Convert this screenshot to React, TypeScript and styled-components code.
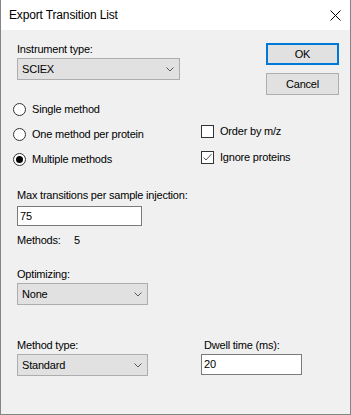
import React from "react";
import styled, { createGlobalStyle } from "styled-components";

const Global = createGlobalStyle`
  html, body { margin: 0; padding: 0; background: #ffffff; }
  body { font-family: "Liberation Sans", Arial, sans-serif; font-size: 11px; letter-spacing: -0.2px; color: #000; }
  * { box-sizing: border-box; }
`;

const Window = styled.div`
  width: 351px;
  height: 415px;
  border: 1px solid #858585;
  border-top: none;
  background: #f0f0f0;
  display: flex;
  flex-direction: column;
`;

const TitleBar = styled.div`
  height: 30px;
  background: #ffffff;
  display: flex;
  align-items: center;
  justify-content: space-between;
  padding: 0 9px 0 8px;
  flex-shrink: 0;
`;

const Title = styled.span`
  font-size: 12px;
  letter-spacing: -0.15px;
  line-height: 15px;
  color: #000;
  margin-top: 1px;
`;

const Body = styled.div`
  flex: 1;
  padding: 12px 11px 0 16px;
  display: flex;
  flex-direction: column;
`;

const TopSection = styled.div`
  display: flex;
  justify-content: space-between;
  align-items: flex-start;
`;

const Field = styled.div<{ $w?: number }>`
  display: flex;
  flex-direction: column;
  width: ${(p) => (p.$w ? `${p.$w}px` : "auto")};
`;

const Label = styled.div<{ $indent?: number; $gap?: number }>`
  line-height: 15px;
  padding-left: ${(p) => p.$indent ?? 0}px;
  margin-bottom: ${(p) => p.$gap ?? 1}px;
  white-space: nowrap;
`;

const Combo = styled.div<{ $w: number }>`
  width: ${(p) => p.$w}px;
  height: 22px;
  background: #e1e1e1;
  border: 1px solid #adadad;
  display: flex;
  align-items: center;
  justify-content: space-between;
  padding: 0 5px 0 4px;
  line-height: 15px;
`;

const TextBox = styled.div<{ $w: number; $h: number }>`
  width: ${(p) => p.$w}px;
  height: ${(p) => p.$h}px;
  background: #ffffff;
  border: 1px solid #7a7a7a;
  display: flex;
  align-items: center;
  padding-left: 2px;
  line-height: 15px;
`;

const ButtonColumn = styled.div`
  display: flex;
  flex-direction: column;
  gap: 8px;
  margin-top: 1px;
`;

const Button = styled.div<{ $default?: boolean }>`
  width: 73px;
  height: 22px;
  background: #e1e1e1;
  border: ${(p) => (p.$default ? "2px solid #0078d7" : "1px solid #adadad")};
  display: flex;
  align-items: center;
  justify-content: center;
  line-height: 15px;
`;

const OptionsSection = styled.div`
  display: flex;
  margin-top: 2px;
  margin-left: -4px;
`;

const RadioColumn = styled.div`
  width: 188px;
  display: flex;
  flex-direction: column;
`;

const CheckColumn = styled.div`
  display: flex;
  flex-direction: column;
  padding-top: 21px;
`;

const OptionRow = styled.div<{ $h: number }>`
  height: ${(p) => p.$h}px;
  display: flex;
  align-items: center;
  gap: 6px;
  line-height: 15px;
`;

const RadioCircle = styled.span<{ $on?: boolean }>`
  width: 13px;
  height: 13px;
  border-radius: 50%;
  border: 1px solid #333333;
  background: #ffffff;
  display: flex;
  align-items: center;
  justify-content: center;
  flex-shrink: 0;
  &::after {
    content: "";
    width: 7px;
    height: 7px;
    border-radius: 50%;
    background: ${(p) => (p.$on ? "#000" : "transparent")};
  }
`;

const CheckBox = styled.span`
  width: 13px;
  height: 13px;
  border: 1px solid #333333;
  background: #ffffff;
  display: flex;
  align-items: center;
  justify-content: center;
  flex-shrink: 0;
`;

const MaxSection = styled.div`
  margin-top: 16px;
  display: flex;
  flex-direction: column;
`;

const MethodsLine = styled.div`
  margin-top: 7px;
  line-height: 15px;
  display: flex;
`;

const MethodsKey = styled.span`
  width: 57px;
`;

const OptimizingSection = styled.div`
  margin-top: 19px;
`;

const BottomRow = styled.div`
  margin-top: 33px;
  display: flex;
  align-items: flex-start;
`;

const Chevron = () => (
  <svg width="8" height="5" viewBox="0 0 8 5">
    <polyline points="0.5,0.5 4,4 7.5,0.5" fill="none" stroke="#5a5a5a" strokeWidth="1" />
  </svg>
);

const CloseIcon = () => (
  <svg width="11" height="11" viewBox="0 0 11 11">
    <path d="M0.5 0.5 L10.5 10.5 M10.5 0.5 L0.5 10.5" stroke="#000" strokeWidth="1" />
  </svg>
);

const CheckMark = () => (
  <svg width="11" height="11" viewBox="0 0 11 11">
    <polyline points="1.5,5.5 4,8 9.5,2" fill="none" stroke="#555" strokeWidth="1" />
  </svg>
);

export default function App() {
  return (
    <>
      <Global />
      <Window>
        <TitleBar>
          <Title>Export Transition List</Title>
          <CloseIcon />
        </TitleBar>
        <Body>
          <TopSection>
            <Field $w={163}>
              <Label>Instrument type:</Label>
              <Combo $w={163}>
                <span>SCIEX</span>
                <Chevron />
              </Combo>
            </Field>
            <ButtonColumn>
              <Button $default>OK</Button>
              <Button>Cancel</Button>
            </ButtonColumn>
          </TopSection>

          <OptionsSection>
            <RadioColumn>
              <OptionRow $h={25}>
                <RadioCircle />
                <span>Single method</span>
              </OptionRow>
              <OptionRow $h={25}>
                <RadioCircle />
                <span>One method per protein</span>
              </OptionRow>
              <OptionRow $h={25}>
                <RadioCircle $on />
                <span>Multiple methods</span>
              </OptionRow>
            </RadioColumn>
            <CheckColumn>
              <OptionRow $h={26}>
                <CheckBox />
                <span>Order by m/z</span>
              </OptionRow>
              <OptionRow $h={26}>
                <CheckBox>
                  <CheckMark />
                </CheckBox>
                <span>Ignore proteins</span>
              </OptionRow>
            </CheckColumn>
          </OptionsSection>

          <MaxSection>
            <Label $gap={3}>Max transitions per sample injection:</Label>
            <TextBox $w={125} $h={20}>75</TextBox>
            <MethodsLine>
              <MethodsKey>Methods:</MethodsKey>
              <span>5</span>
            </MethodsLine>
          </MaxSection>

          <OptimizingSection>
            <Field $w={131}>
              <Label>Optimizing:</Label>
              <Combo $w={131}>
                <span>None</span>
                <Chevron />
              </Combo>
            </Field>
          </OptimizingSection>

          <BottomRow>
            <Field $w={184}>
              <Label>Method type:</Label>
              <Combo $w={131}>
                <span>Standard</span>
                <Chevron />
              </Combo>
            </Field>
            <Field>
              <Label $indent={3}>Dwell time (ms):</Label>
              <TextBox $w={101} $h={21}>20</TextBox>
            </Field>
          </BottomRow>
        </Body>
      </Window>
    </>
  );
}
